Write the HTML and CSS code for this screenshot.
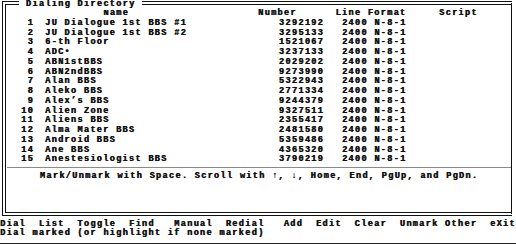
FILE: index.html
```html
<!DOCTYPE html>
<html>
<head>
<meta charset="utf-8">
<title>Dialing Directory</title>
<link rel="stylesheet" href="styles.css">
</head>
<body>
<div class="screen">
  <section class="dir">
    <h1 class="dir-title"> Dialing Directory </h1>
    <div class="list">
      <div class="row head"><span class="c-num"></span><span class="c-name">Name</span><span class="c-phone">Number</span><span class="c-fmt">Line Format</span><span class="c-script">Script</span></div>
      <div class="row"><span class="c-num">1</span><span class="c-name">JU Dialogue 1st BBS #1</span><span class="c-phone">3292192</span><span class="c-fmt">2400 N-8-1</span><span class="c-script"></span></div>
      <div class="row"><span class="c-num">2</span><span class="c-name">JU Dialogue 1st BBS #2</span><span class="c-phone">3295133</span><span class="c-fmt">2400 N-8-1</span><span class="c-script"></span></div>
      <div class="row"><span class="c-num">3</span><span class="c-name">6-th Floor</span><span class="c-phone">1521067</span><span class="c-fmt">2400 N-8-1</span><span class="c-script"></span></div>
      <div class="row"><span class="c-num">4</span><span class="c-name">ADC•</span><span class="c-phone">3237133</span><span class="c-fmt">2400 N-8-1</span><span class="c-script"></span></div>
      <div class="row"><span class="c-num">5</span><span class="c-name">ABN1stBBS</span><span class="c-phone">2029202</span><span class="c-fmt">2400 N-8-1</span><span class="c-script"></span></div>
      <div class="row"><span class="c-num">6</span><span class="c-name">ABN2ndBBS</span><span class="c-phone">9273990</span><span class="c-fmt">2400 N-8-1</span><span class="c-script"></span></div>
      <div class="row"><span class="c-num">7</span><span class="c-name">Alan BBS</span><span class="c-phone">5322943</span><span class="c-fmt">2400 N-8-1</span><span class="c-script"></span></div>
      <div class="row"><span class="c-num">8</span><span class="c-name">Aleko BBS</span><span class="c-phone">2771334</span><span class="c-fmt">2400 N-8-1</span><span class="c-script"></span></div>
      <div class="row"><span class="c-num">9</span><span class="c-name">Alex’s BBS</span><span class="c-phone">9244379</span><span class="c-fmt">2400 N-8-1</span><span class="c-script"></span></div>
      <div class="row"><span class="c-num">10</span><span class="c-name">Alien Zone</span><span class="c-phone">9327511</span><span class="c-fmt">2400 N-8-1</span><span class="c-script"></span></div>
      <div class="row"><span class="c-num">11</span><span class="c-name">Aliens BBS</span><span class="c-phone">2355417</span><span class="c-fmt">2400 N-8-1</span><span class="c-script"></span></div>
      <div class="row"><span class="c-num">12</span><span class="c-name">Alma Mater BBS</span><span class="c-phone">2481580</span><span class="c-fmt">2400 N-8-1</span><span class="c-script"></span></div>
      <div class="row"><span class="c-num">13</span><span class="c-name">Android BBS</span><span class="c-phone">5359486</span><span class="c-fmt">2400 N-8-1</span><span class="c-script"></span></div>
      <div class="row"><span class="c-num">14</span><span class="c-name">Ane BBS</span><span class="c-phone">4365320</span><span class="c-fmt">2400 N-8-1</span><span class="c-script"></span></div>
      <div class="row"><span class="c-num">15</span><span class="c-name">Anestesiologist BBS</span><span class="c-phone">3790219</span><span class="c-fmt">2400 N-8-1</span><span class="c-script"></span></div>
    </div>
    <p class="help">Mark/Unmark with Space. Scroll with ↑, ↓, Home, End, PgUp, and PgDn.</p>
  </section>
  <nav class="menu">Dial  List  Toggle  Find   Manual  Redial   Add  Edit  Clear  Unmark Other  eXit</nav>
  <div class="status">Dial marked (or highlight if none marked)</div>
</div>
</body>
</html>
```

FILE: styles.css
```css
html, body {
  margin: 0;
  padding: 0;
  background: #fff;
}

body {
  width: 516px;
  height: 244px;
  overflow: hidden;
}

.screen {
  width: 516px;
  height: 244px;
  box-sizing: border-box;
  border-bottom: 1px solid #222;
  display: flex;
  flex-direction: column;
  font: bold 8.6px/9.75px "Liberation Mono", "DejaVu Sans Mono", monospace;
  letter-spacing: 1.29px;
  color: #111;
  text-shadow: 0.5px 0 0 #111;
}

.dir {
  position: relative;
  margin: 1px 4px 0 2px;
  height: 215px;
  box-sizing: border-box;
  border-top: 4px double #111;
  border-left: 4px double #111;
  border-right: 1px solid #111;
  border-bottom: 4px double #111;
  display: flex;
  flex-direction: column;
}

.dir-title {
  position: absolute;
  top: -5px;
  left: 13.35px;
  margin: 0;
  font: inherit;
  background: #fff;
  white-space: pre;
}

.list {
  padding-top: 4px;
}

.row {
  display: grid;
  grid-template-columns: 27px 225px 65px 116px 1fr;
  height: 9.75px;
  white-space: pre;
}

.c-num {
  text-align: right;
  margin-right: -1px;
}

.c-name {
  padding-left: 12px;
}

.c-phone {
  text-align: right;
  margin-right: -1px;
}

.c-fmt {
  padding-left: 18.9px;
}

.head .c-name {
  padding-left: 70.2px;
}

.head .c-phone {
  text-align: left;
  margin-right: 0;
}

.head .c-fmt {
  padding-left: 12.4px;
}

.help {
  flex: 1;
  margin: 2px 0 0 1px;
  padding-top: 4.4px;
  border-top: 1px solid #8a8a8a;
  text-align: center;
  white-space: pre;
}

.menu {
  margin-top: 4px;
  height: 9.25px;
  white-space: pre;
}

.status {
  white-space: pre;
}
```
